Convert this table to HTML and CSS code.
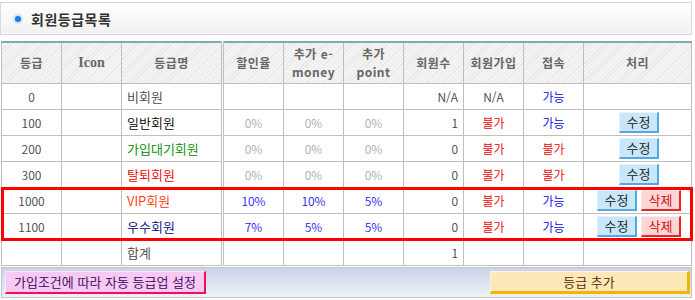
FILE: index.html
```html
<!DOCTYPE html>
<html lang="ko">
<head>
<meta charset="utf-8">
<title>회원등급목록</title>
<link rel="stylesheet" href="styles.css">
</head>
<body>
<div class="page">
  <div class="titlebox">
    <span class="dot"></span>
    <span class="title">회원등급목록</span>
  </div>
  <table class="grid">
    <colgroup>
      <col class="c60"><col class="c60"><col class="c101"><col class="c61"><col class="c60"><col class="c60"><col class="c60"><col class="c60"><col class="c60"><col>
    </colgroup>
    <thead>
      <tr>
        <th>등급</th>
        <th class="icon">Icon</th>
        <th class="sep">등급명</th>
        <th>할인율</th>
        <th>추가 e-<br>money</th>
        <th>추가<br>point</th>
        <th>회원수</th>
        <th>회원가입</th>
        <th>접속</th>
        <th>처리</th>
      </tr>
    </thead>
    <tbody>
      <tr>
        <td>0</td><td></td><td class="name sep grey">비회원</td>
        <td></td><td></td><td></td>
        <td class="num grey">N/A</td><td class="grey">N/A</td><td class="blue">가능</td><td></td>
      </tr>
      <tr>
        <td>100</td><td></td><td class="name sep black">일반회원</td>
        <td class="pct">0%</td><td class="pct">0%</td><td class="pct">0%</td>
        <td class="num">1</td><td class="red">불가</td><td class="blue">가능</td>
        <td><div class="acts"><button class="btn edit">수정</button></div></td>
      </tr>
      <tr>
        <td>200</td><td></td><td class="name sep green">가입대기회원</td>
        <td class="pct">0%</td><td class="pct">0%</td><td class="pct">0%</td>
        <td class="num">0</td><td class="red">불가</td><td class="red">불가</td>
        <td><div class="acts"><button class="btn edit">수정</button></div></td>
      </tr>
      <tr>
        <td>300</td><td></td><td class="name sep red">탈퇴회원</td>
        <td class="pct">0%</td><td class="pct">0%</td><td class="pct">0%</td>
        <td class="num">0</td><td class="red">불가</td><td class="red">불가</td>
        <td><div class="acts"><button class="btn edit">수정</button></div></td>
      </tr>
    </tbody>
    <tbody class="hl">
      <tr>
        <td>1000</td><td></td><td class="name sep orange">VIP회원</td>
        <td class="pct on">10%</td><td class="pct on">10%</td><td class="pct on">5%</td>
        <td class="num">0</td><td class="red">불가</td><td class="blue">가능</td>
        <td><div class="acts"><button class="btn edit">수정</button><button class="btn del">삭제</button></div></td>
      </tr>
      <tr>
        <td>1100</td><td></td><td class="name sep navy">우수회원</td>
        <td class="pct on">7%</td><td class="pct on">5%</td><td class="pct on">5%</td>
        <td class="num">0</td><td class="red">불가</td><td class="blue">가능</td>
        <td><div class="acts"><button class="btn edit">수정</button><button class="btn del">삭제</button></div></td>
      </tr>
    </tbody>
    <tbody>
      <tr class="total">
        <td></td><td></td><td class="name sep grey">합계</td>
        <td></td><td></td><td></td>
        <td class="num">1</td><td></td><td></td><td></td>
      </tr>
    </tbody>
  </table>
  <div class="footer">
    <button class="fbtn auto">가입조건에 따라 자동 등급업 설정</button>
    <button class="fbtn add">등급 추가</button>
  </div>
</div>
</body>
</html>
```
FILE: styles.css
```css
html, body {
  margin: 0;
  padding: 0;
  background: #ffffff;
}
body {
  font-family: "Noto Sans CJK KR", "DejaVu Sans", sans-serif;
  font-size: 12px;
  color: #333333;
}
.page {
  width: 692px;
  padding-top: 2px;
}
.titlebox {
  height: 31px;
  border: 1px solid #d9d9d9;
  background: linear-gradient(#ffffff, #f1f1f1);
  box-shadow: inset 0 0 0 1px #fafafa;
  display: flex;
  align-items: center;
  padding-left: 14px;
  gap: 10px;
}
.dot {
  width: 6px;
  height: 6px;
  border-radius: 50%;
  background: #1b7de0;
  box-shadow: 0 0 0 2px #cfe4f7;
}
.title {
  font-weight: bold;
  font-size: 14px;
  color: #333333;
  letter-spacing: 0.5px;
}
.grid {
  margin-top: 6px;
  margin-left: 1px;
  width: 691px;
  border-collapse: collapse;
  table-layout: fixed;
  border-top: 2px solid #7eaab3;
}
.c60 { width: 60px; }
.c61 { width: 61px; }
.c101 { width: 101px; }
.grid th, .grid td {
  border: 1px solid #bfbfbf;
  text-align: center;
  padding: 0 4px;
  line-height: 17px;
}
.grid th {
  height: 40px;
  font-size: 12px;
  line-height: 18px;
  font-weight: bold;
  color: #666666;
  letter-spacing: 0.5px;
  background: repeating-linear-gradient(-45deg, #f5f5f5 0, #f5f5f5 2px, #e6e6e6 2px, #e6e6e6 3px);
}
.grid th.icon {
  font-family: "Liberation Serif", serif;
  font-size: 14px;
  letter-spacing: 0;
}
.grid .sep {
  border-right: 3px double #bfbfbf;
}
.grid td {
  height: 25px;
  color: #444444;
  font-weight: 350;
}
.grid td.name {
  text-align: left;
  padding-left: 5px;
  font-size: 13px;
}
.grid td.num {
  text-align: right;
  padding-right: 5px;
}
.grey { color: #555555; }
.grid td.black { color: #000000; }
.grid td.green { color: #008800; }
.grid td.red { color: #ee0000; }
.grid td.orange { color: #ff3300; }
.grid td.navy { color: #000080; }
.grid td.blue { color: #0000ee; }
.grid td.pct { color: #aaaaaa; }
.grid td.pct.on { color: #2222ee; }
.grid tbody.hl {
  outline: 3px solid #ff0000;
  outline-offset: -2px;
}
.acts {
  display: flex;
  justify-content: center;
  gap: 4px;
  padding-left: 3px;
}
.btn {
  font-family: "Noto Sans CJK KR", sans-serif;
  font-size: 13px;
  font-weight: 350;
  line-height: 16px;
  width: 40px;
  height: 21px;
  padding: 0;
  margin: 0;
  color: #111111;
  cursor: pointer;
}
.btn.edit {
  background: #c8e7fb;
  border-top: 1px solid #e4f3fd;
  border-left: 1px solid #e4f3fd;
  border-right: 2px solid #55a7e3;
  border-bottom: 2px solid #55a7e3;
}
.btn.del {
  background: #ffd6d6;
  color: #cc0000;
  border-top: 1px solid #ffeaea;
  border-left: 1px solid #ffeaea;
  border-right: 2px solid #ee2222;
  border-bottom: 2px solid #ee2222;
}
.footer {
  margin-top: 1px;
  margin-left: 1px;
  height: 29px;
  border: 1px solid #c4c4c4;
  background: linear-gradient(#c9d3ea, #eef1f8);
  display: flex;
  align-items: center;
  justify-content: space-between;
  padding: 0 1px 0 3px;
}
.fbtn {
  font-family: "Noto Sans CJK KR", sans-serif;
  font-size: 13px;
  font-weight: 350;
  line-height: 16px;
  height: 23px;
  padding: 0;
  margin: 0;
  cursor: pointer;
}
.fbtn.auto {
  width: 201px;
  background: #f7c9f4;
  color: #330055;
  border-top: 1px solid #fbe6fa;
  border-left: 1px solid #fbe6fa;
  border-right: 2px solid #ee1155;
  border-bottom: 2px solid #ee1155;
}
.fbtn.add {
  width: 200px;
  background: #fde8b8;
  color: #552200;
  border-top: 1px solid #fff4da;
  border-left: 1px solid #fff4da;
  border-right: 3px solid #f4b400;
  border-bottom: 3px solid #f4b400;
}
```
